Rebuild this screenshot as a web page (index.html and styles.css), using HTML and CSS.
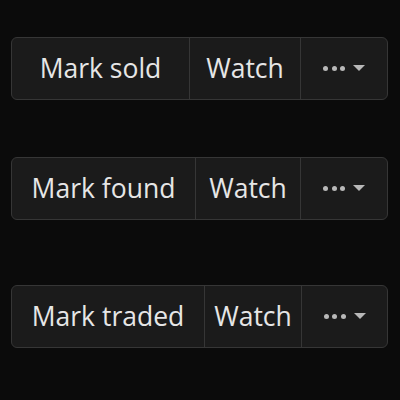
FILE: index.html
```html
<!DOCTYPE html>
<html>
<head>
<meta charset="utf-8">
<link rel="stylesheet" href="styles.css">
</head>
<body>
<div class="stack">
  <div class="group g-sold">
    <button class="btn">Mark sold</button>
    <button class="btn">Watch</button>
    <button class="btn more" aria-label="More">
      <span class="dots"><i></i><i></i><i></i></span>
      <svg class="caret" width="12" height="6" viewBox="0 0 12 6"><path d="M0 0H12L6 6Z" fill="#b8b8b8"/></svg>
    </button>
  </div>
  <div class="group g-found">
    <button class="btn">Mark found</button>
    <button class="btn">Watch</button>
    <button class="btn more" aria-label="More">
      <span class="dots"><i></i><i></i><i></i></span>
      <svg class="caret" width="12" height="6" viewBox="0 0 12 6"><path d="M0 0H12L6 6Z" fill="#b8b8b8"/></svg>
    </button>
  </div>
  <div class="group g-traded">
    <button class="btn">Mark traded</button>
    <button class="btn">Watch</button>
    <button class="btn more" aria-label="More">
      <span class="dots"><i></i><i></i><i></i></span>
      <svg class="caret" width="12" height="6" viewBox="0 0 12 6"><path d="M0 0H12L6 6Z" fill="#b8b8b8"/></svg>
    </button>
  </div>
</div>
</body>
</html>
```
FILE: styles.css
```css
html, body {
  margin: 0;
  padding: 0;
  background: #0b0b0b;
  height: 100%;
}
.stack {
  display: flex;
  flex-direction: column;
  padding: 37px 12px 0 11px;
}
.group {
  display: grid;
  height: 63px;
  box-sizing: border-box;
  border: 1px solid #363636;
  border-radius: 6px;
  background: #1b1b1b;
  overflow: hidden;
}
.g-sold { grid-template-columns: 177px 111px 1fr; }
.g-found { grid-template-columns: 183px 105px 1fr; margin-top: 57px; }
.g-traded { grid-template-columns: 192px 97px 1fr; margin-top: 65px; }
.btn {
  display: flex;
  align-items: center;
  justify-content: center;
  background: transparent;
  border: 0;
  border-left: 1px solid #363636;
  color: #e6e6e6;
  font-family: "Open Sans", "Noto Sans", sans-serif;
  font-size: 26.5px;
  padding: 0 0 2px;
  margin: 0;
  white-space: nowrap;
}
.btn:first-child { border-left: 0; }
.more { gap: 8px; padding: 0; }
.dots { display: flex; gap: 3.5px; }
.dots i {
  display: block;
  width: 5px;
  height: 5px;
  border-radius: 50%;
  background: #b8b8b8;
}
.caret { display: block; margin-top: -2px; }
```
